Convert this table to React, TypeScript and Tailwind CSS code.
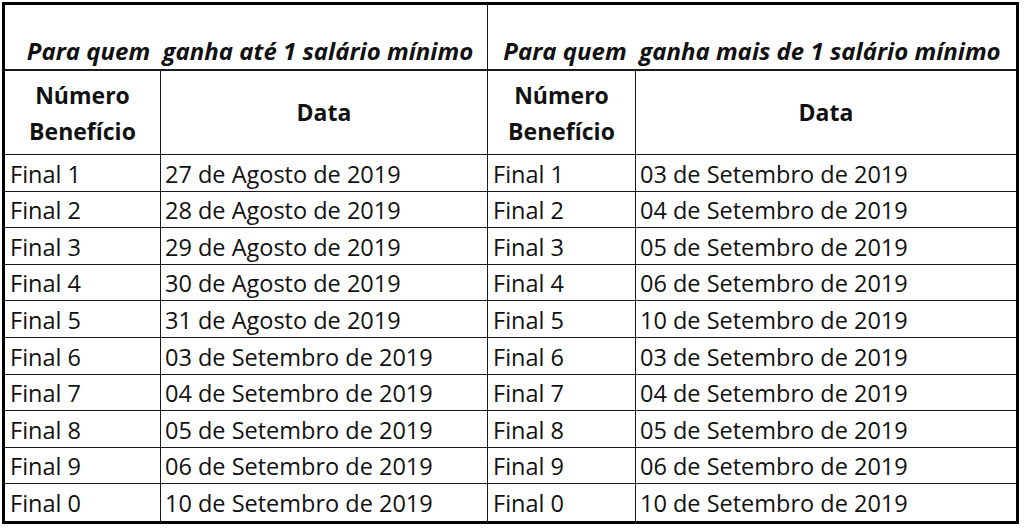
const left = [
  "27 de Agosto de 2019",
  "28 de Agosto de 2019",
  "29 de Agosto de 2019",
  "30 de Agosto de 2019",
  "31 de Agosto de 2019",
  "03 de Setembro de 2019",
  "04 de Setembro de 2019",
  "05 de Setembro de 2019",
  "06 de Setembro de 2019",
  "10 de Setembro de 2019",
];

const right = [
  "03 de Setembro de 2019",
  "04 de Setembro de 2019",
  "05 de Setembro de 2019",
  "06 de Setembro de 2019",
  "10 de Setembro de 2019",
  "03 de Setembro de 2019",
  "04 de Setembro de 2019",
  "05 de Setembro de 2019",
  "06 de Setembro de 2019",
  "10 de Setembro de 2019",
];

const finals = [1, 2, 3, 4, 5, 6, 7, 8, 9, 0];

export default function App() {
  return (
    <div className="min-h-screen bg-white pl-[2px] pt-[2px] font-['Open_Sans',sans-serif] text-[#111]">
      <div className="w-[1017px] border-[3px] border-black">
        <table className="w-full table-fixed border-separate border-spacing-0 text-[23.5px] leading-none">
          <colgroup>
            <col className="w-[156px]" />
            <col className="w-[327px]" />
            <col className="w-[148px]" />
            <col className="w-[380px]" />
          </colgroup>
          <thead>
            <tr className="h-[66px]">
              <th
                colSpan={2}
                className="border-b-2 border-r border-[#1a1a1a] pb-[6px] pl-[8px] align-bottom text-center text-[24px] font-bold italic whitespace-pre"
              >
                {"Para quem  ganha até 1 salário mínimo"}
              </th>
              <th
                colSpan={2}
                className="border-b-2 border-[#1a1a1a] pb-[6px] align-bottom text-center text-[24px] font-bold italic whitespace-pre"
              >
                {"Para quem  ganha mais de 1 salário mínimo"}
              </th>
            </tr>
            <tr className="h-[84px]">
              <th className="border-b border-r border-[#1a1a1a] text-center text-[23px] font-bold leading-[36px]">
                Número
                <br />
                Benefício
              </th>
              <th className="border-b border-r border-[#1a1a1a] text-center text-[23px] font-bold">Data</th>
              <th className="border-b border-r border-[#1a1a1a] text-center text-[23px] font-bold leading-[36px]">
                Número
                <br />
                Benefício
              </th>
              <th className="border-b border-[#1a1a1a] text-center text-[23px] font-bold">Data</th>
            </tr>
          </thead>
          <tbody>
            {finals.map((n, i) => {
              const last = i === finals.length - 1;
              const b = last ? "" : "border-b";
              return (
                <tr key={n} className="h-[36.6px]">
                  <td className={`${b} border-r border-[#1a1a1a] pl-[5px] pt-[3px]`}>Final {n}</td>
                  <td className={`${b} border-r border-[#1a1a1a] pl-[4px] pt-[3px]`}>{left[i]}</td>
                  <td className={`${b} border-r border-[#1a1a1a] pl-[5px] pt-[3px]`}>Final {n}</td>
                  <td className={`${b} border-[#1a1a1a] pl-[4px] pt-[3px]`}>{right[i]}</td>
                </tr>
              );
            })}
          </tbody>
        </table>
      </div>
    </div>
  );
}
